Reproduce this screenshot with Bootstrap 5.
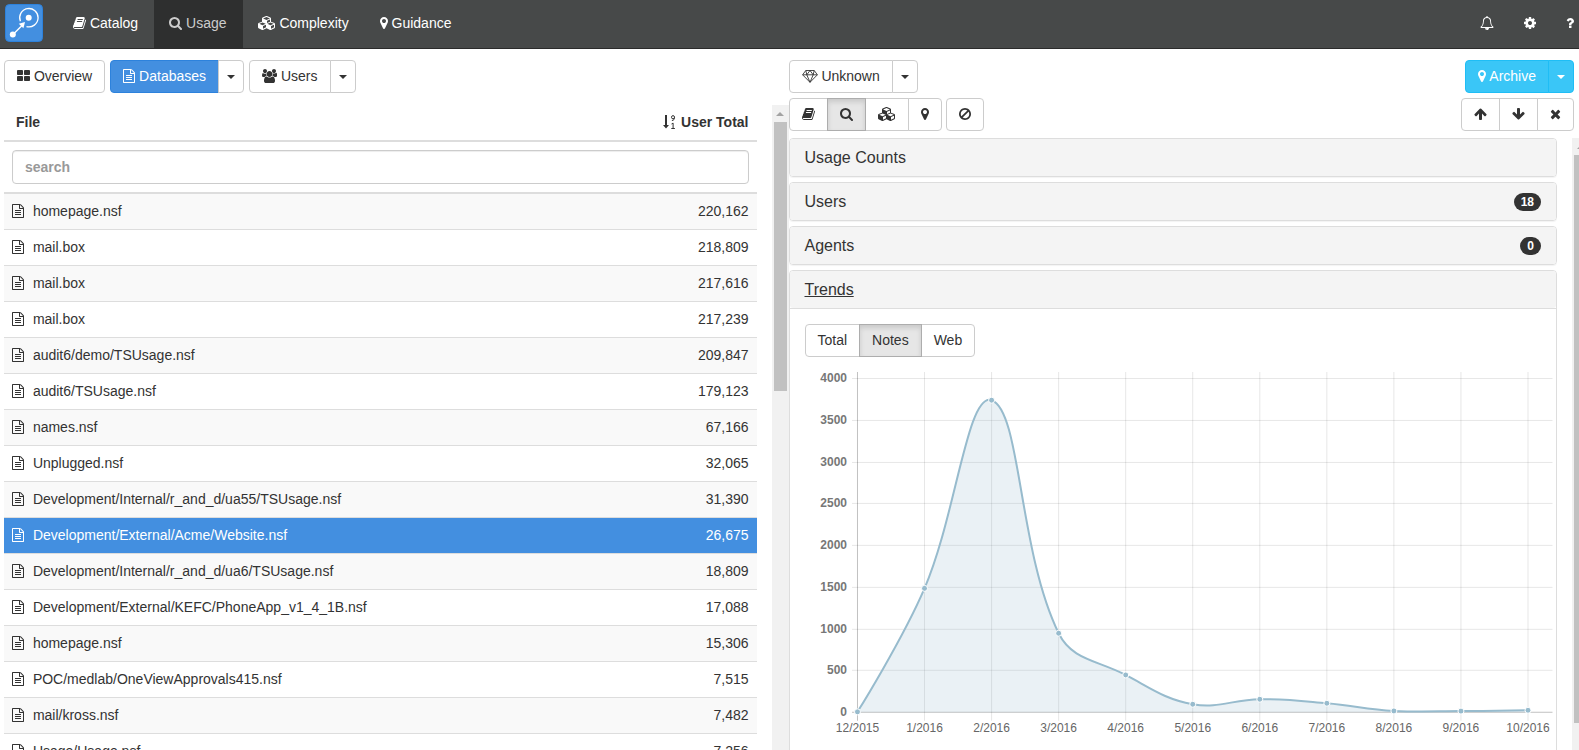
<!DOCTYPE html>
<html lang="en">
<head>
<meta charset="utf-8">
<meta name="viewport" content="width=device-width, initial-scale=1">
<title>Usage - Databases</title>
<link href="https://cdn.jsdelivr.net/npm/bootstrap@5.3.0/dist/css/bootstrap.min.css" rel="stylesheet">
<style>
  :root { --ink: #333; --line: #ddd; --edge: #ccc; --brand: #438fe0; --sky: #3ac6f7; --bar: 17px; }
  body { font: 14px/20px "Liberation Sans", Arial, sans-serif; color: var(--ink); background: #fff; }
  .fa-ico { height: 14px; fill: currentColor; vertical-align: -2px; }

  /* top navigation */
  .topbar { background: #474949; border-bottom: 1px solid #2b2b2b; height: 49px; }
  .topbar .nav-link { color: #fff; padding: 13px 15px 15px; line-height: 20px; }
  .topbar .main-nav .nav-link { padding: 13px 16px 15px 15px; }
  .topbar .nav-link.active { background: #2e2f2f; color: #ccc; }
  .brand { padding: 4px 15px 6px 5px; }
  .tools { margin-right: -10px; }

  /* buttons */
  .btn { --bs-btn-font-size: 14px; --bs-btn-line-height: 19px; --bs-btn-padding-y: 6px; --bs-btn-padding-x: 12px; --bs-btn-border-radius: 4px; }
  .btn-plain { --bs-btn-color: #333; --bs-btn-bg: #fff; --bs-btn-border-color: #ccc; --bs-btn-hover-bg: #e6e6e6; --bs-btn-hover-border-color: #adadad; --bs-btn-active-bg: #e6e6e6; --bs-btn-active-color: #333; --bs-btn-active-border-color: #adadad; }
  .btn-plain.active { box-shadow: inset 0 3px 5px rgba(0,0,0,.125); }
  .btn-brand { --bs-btn-color: #fff; --bs-btn-bg: var(--brand); --bs-btn-border-color: #2d82dc; --bs-btn-hover-color: #fff; --bs-btn-hover-bg: #2d82dc; }
  .btn-sky { --bs-btn-color: #fff; --bs-btn-bg: var(--sky); --bs-btn-border-color: #1fbdf5; --bs-btn-hover-color: #fff; --bs-btn-hover-bg: #1fbdf5; }
  .btn-caret { --bs-btn-padding-x: 8px; }
  .btn-caret::after { border-width: 4px 4px 0; margin: 0 !important; vertical-align: middle; }

  /* panes */
  .pane-left { width: calc(50% - 1px); padding: 11px 0 0 4px; }
  .pane-right { padding-top: 11px; margin-right: -10px; }
  .bars { gap: 5px; padding-right: 15px; margin-bottom: 7px; }
  .bars > div { gap: 4px; }
  .left-bar { gap: 5px; margin-bottom: 12px; }
  .scroll-area { margin-right: 15px; }
  .track { width: var(--bar); background: #f1f1f1; padding: 0 2px; }
  .track::before { content: ""; display: block; margin: 7px auto 6px; border: solid transparent; border-width: 0 4px 4px; border-bottom-color: #a3a3a3; width: 0; }
  .thumb { background: #c1c1c1; }

  /* file list */
  .files { --bs-table-color: #333; margin: 0; border-collapse: separate; border-spacing: 0; }
  .files > :not(caption) > * > * { padding: 8px; line-height: 19px; border-bottom: 1px solid var(--line); }
  .files > thead > tr > th { border-bottom-width: 2px; }
  .files > thead > tr:first-child > th:first-child { padding-left: 12px; }
  .files > tbody > tr:nth-child(odd) > td { background: #f9f9f9; }
  .files > tbody > tr.picked > td { background: var(--brand); color: #fff; }
  .files .fa-ico { margin-right: 5px; }
  .files th .fa-ico { margin-right: 0; }
  .files .form-control { font: bold 14px/20px "Liberation Sans", Arial, sans-serif; padding: 6px 12px; border-color: var(--edge); border-radius: 4px; box-shadow: inset 0 1px 1px rgba(0,0,0,.075); }
  .files .form-control::placeholder { color: #999; opacity: 1; }

  /* detail panels */
  .panels { gap: 5px; }
  .panel { border: 1px solid var(--line); border-radius: 4px; box-shadow: 0 1px 1px rgba(0,0,0,.05); }
  .panel-top { background: #f4f4f4; padding: 10px 15px; border-radius: 3px; }
  .panel-top h2 { font-size: 16px; line-height: 17px; font-weight: 400; margin: 0; }
  .panel-top a { color: #333; text-decoration: none; }
  .panel-top a[aria-expanded="true"] { text-decoration: underline; }
  .count { font-size: 12px; line-height: 12px; padding: 3px 7px; border-radius: 10px; background: #333; color: #fff; font-weight: 700; margin-bottom: -1px; }
  .panel-main { border-top: 1px solid var(--line); padding: 15px 3px 15px 15px; }
  .chart { margin-top: 15px; font: 12px "Liberation Sans", Arial, sans-serif; }
  .chart text { fill: #666; }
  .chart .y-label { font-weight: 700; fill: #777; text-anchor: end; }
  .chart .x-label { text-anchor: middle; }
  .chart .grid-line { stroke: rgba(0,0,0,.1); }
  .chart .axis { stroke: rgba(0,0,0,.25); stroke-width: 1; }
  .chart .area { fill: rgba(151,187,205,.2); stroke: none; }
  .chart .curve { fill: none; stroke: #97bbcd; stroke-width: 2; }
  .chart circle { fill: #97bbcd; stroke: #fff; stroke-width: 1; }
</style>
</head>
<body class="vh-100 overflow-hidden d-flex flex-column">

<svg width="0" height="0" class="position-absolute" aria-hidden="true">
  <symbol id="i-book" viewBox="64 0 1664 1792"><path d="M1703 478q40 57 18 129l-275 906q-19 64-76.5 107.5t-122.5 43.5h-923q-77 0-148.5-53.5t-99.5-131.5q-24-67-2-127 0-4 3-27t4-37q1-8-3-21.5t-3-19.5q2-11 8-21t16.5-23.5 16.5-23.5q23-38 45-91.5t30-91.5q3-10 .5-30t-.5-28q3-11 17-28t17-23q21-36 42-92t25-90q1-9-2.5-32t.5-28q4-13 22-30.5t22-22.5q19-26 42.5-84.5t27.5-96.5q1-8-3-25.5t-2-26.5q2-8 9-18t18-23 17-21q8-12 16.500-30.500t15-35 16-36 19.500-32 26.500-23.500 36-11.500 47.500 5.500l-1 3q38-9 51-9h761q74 0 114 56t18 130l-274 906q-36 119-71.500 153.500t-128.500 34.500h-869q-27 0-38 15-11 16-1 43 24 70 144 70h923q29 0 56-15.500t35-41.500l300-987q7-22 5-57 38 15 59 43zm-1064 2q-4 13 2 22.500t20 9.500h608q13 0 25.500-9.500t16.500-22.500l21-64q4-13-2-22.500t-20-9.500h-608q-13 0-25.500 9.500t-16.500 22.500zm-83 256q-4 13 2 22.500t20 9.500h608q13 0 25.500-9.500t16.500-22.500l21-64q4-13-2-22.500t-20-9.500h-608q-13 0-25.500 9.500t-16.500 22.500z"/></symbol>
  <symbol id="i-search" viewBox="64 0 1664 1792"><path d="M1216 832q0-185-131.500-316.500t-316.500-131.500-316.500 131.500-131.500 316.500 131.500 316.500 316.500 131.500 316.500-131.500 131.500-316.500zm512 832q0 52-38 90t-90 38q-54 0-90-38l-343-342q-179 124-399 124-143 0-273.500-55.500t-225-150-150-225-55.500-273.500 55.500-273.500 150-225 225-150 273.500-55.500 273.500 55.500 225 150 150 225 55.500 273.500q0 220-124 399l343 343q37 37 37 90z"/></symbol>
  <symbol id="i-cubes" viewBox="0 0 2304 1792"><path d="M640 1632l384-192v-314l-384 164v342zm-64-454l404-173-404-173-404 173zm1088 454l384-192v-314l-384 164v342zm-64-454l404-173-404-173-404 173zm-448-293l384-165v-266l-384 164v267zm-64-379l441-189-441-189-441 189zm1088 518v416q0 36-19 67t-52 47l-448 224q-25 14-57 14t-57-14l-448-224q-4-2-7-4-2 2-7 4l-448 224q-25 14-57 14t-57-14l-448-224q-33-16-52-47t-19-67v-416q0-38 21.500-70t56.500-48l434-186v-400q0-38 21.500-70t56.500-48l448-192q23-10 50-10t50 10l448 192q35 16 56.500 48t21.500 70v400l434 186q36 16 57 48t21 70z"/></symbol>
  <symbol id="i-pin" viewBox="384 0 1024 1792"><path d="M1152 640q0-106-75-181t-181-75-181 75-75 181 75 181 181 75 181-75 75-181zm256 0q0 109-33 179l-364 774q-16 33-47.500 52t-67.500 19-67.500-19-46.500-52l-365-774q-33-70-33-179 0-212 150-362t362-150 362 150 150 362z"/></symbol>
  <symbol id="i-bell" viewBox="0 0 1792 1792"><path d="M912 1696q0-16-16-16-59 0-101.500-42.500t-42.500-101.500q0-16-16-16t-16 16q0 73 51.500 124.500t124.500 51.500q16 0 16-16zm-666-288h1300q-266-300-266-832 0-51-24-105t-69-103-121.500-80.500-169.500-31.500-169.500 31.500-121.500 80.500-69 103-24 105q0 532-266 832zm1482 0q0 52-38 90t-90 38h-448q0 106-75 181t-181 75-181-75-75-181h-448q-52 0-90-38t-38-90q50-42 91-88t85-119.500 74.500-158.500 50-206 19.500-260q0-152 117-282.500t307-158.500q-8-19-8-39 0-40 28-68t68-28 68 28 28 68q0 20-8 39 190 28 307 158.500t117 282.500q0 139 19.500 260t50 206 74.500 158.500 85 119.500 91 88z"/></symbol>
  <symbol id="i-cog" viewBox="128 0 1536 1792"><path d="M1152 896q0-106-75-181t-181-75-181 75-75 181 75 181 181 75 181-75 75-181zm512-109v222q0 12-8 23t-20 13l-185 28q-19 54-39 91 35 50 107 138 10 12 10 25t-9 23q-27 37-99 108t-94 71q-12 0-26-9l-138-108q-44 23-91 38-16 136-29 186-7 28-36 28h-222q-14 0-24.500-8.500t-11.500-21.500l-28-184q-49-16-90-37l-141 107q-10 9-25 9-14 0-25-11-126-114-165-168-7-10-7-23 0-12 8-23 15-21 51-66.500t54-70.500q-27-50-41-99l-183-27q-13-2-21-12.500t-8-23.500v-222q0-12 8-23t19-13l186-28q14-46 39-92-40-57-107-138-10-12-10-24 0-10 9-23 26-36 98.500-107.500t94.500-71.500q13 0 26 10l138 107q44-23 91-38 16-136 29-186 7-28 36-28h222q14 0 24.500 8.500t11.500 21.500l28 184q49 16 90 37l142-107q9-9 24-9 13 0 25 10 129 119 165 170 7 8 7 22 0 12-8 23-15 21-51 66.500t-54 70.500q26 50 41 98l183 28q13 2 21 12.500t8 23.500z"/></symbol>
  <symbol id="i-help" viewBox="384 0 1024 1792"><path d="M1088 1256v240q0 16-12 28t-28 12h-240q-16 0-28-12t-12-28v-240q0-16 12-28t28-12h240q16 0 28 12t12 28zm316-600q0 54-15.500 101t-35 76.500-55 59.500-57.500 43.500-61 35.500q-41 23-68.500 65t-27.500 67q0 17-12 32.500t-28 15.500h-240q-15 0-25.500-18.500t-10.500-37.500v-45q0-83 65-156.500t143-108.500q59-27 84-56t25-76q0-42-46.500-74t-107.500-32q-65 0-108 29-35 25-107 115-13 16-31 16-12 0-25-8l-164-125q-13-10-15.500-25t5.500-28q160-266 464-266 80 0 161 31t146 83 106 127.500 41 158.500z"/></symbol>
  <symbol id="i-grid" viewBox="64 0 1664 1792"><path d="M832 1024v384q0 52-38 90t-90 38h-512q-52 0-90-38t-38-90v-384q0-52 38-90t90-38h512q52 0 90 38t38 90zm0-768v384q0 52-38 90t-90 38h-512q-52 0-90-38t-38-90v-384q0-52 38-90t90-38h512q52 0 90 38t38 90zm896 768v384q0 52-38 90t-90 38h-512q-52 0-90-38t-38-90v-384q0-52 38-90t90-38h512q52 0 90 38t38 90zm0-768v384q0 52-38 90t-90 38h-512q-52 0-90-38t-38-90v-384q0-52 38-90t90-38h512q52 0 90 38t38 90z"/></symbol>
  <symbol id="i-file" viewBox="128 0 1536 1792"><path d="M1596 380q28 28 48 76t20 88v1152q0 40-28 68t-68 28h-1344q-40 0-68-28t-28-68v-1600q0-40 28-68t68-28h896q40 0 88 20t76 48zm-444-244v376h376q-10-29-22-41l-313-313q-12-12-41-22zm384 1528v-1024h-416q-40 0-68-28t-28-68v-416h-768v1536h1280zm-1024-864q0-14 9-23t23-9h704q14 0 23 9t9 23v64q0 14-9 23t-23 9h-704q-14 0-23-9t-9-23v-64zm736 224q14 0 23 9t9 23v64q0 14-9 23t-23 9h-704q-14 0-23-9t-9-23v-64q0-14 9-23t23-9h704zm0 256q14 0 23 9t9 23v64q0 14-9 23t-23 9h-704q-14 0-23-9t-9-23v-64q0-14 9-23t23-9h704z"/></symbol>
  <symbol id="i-users" viewBox="0 0 1920 1792"><path d="M593 896q-162 5-265 128h-134q-82 0-138-40.500t-56-118.500q0-353 124-353 6 0 43.500 21t97.500 42.500 119 21.500q67 0 133-23-5 37-5 66 0 159 81 256zm1071 637q0 120-73 189.500t-194 69.500h-874q-121 0-194-69.500t-73-189.500q0-53 3.500-103.500t14-109 26.500-108.500 43-97.500 62-81 85.500-53.500 111.500-20q10 0 43 21.500t73 48 107 48 135 21.500 135-21.500 107-48 73-48 43-21.500q61 0 111.500 20t85.500 53.500 62 81 43 97.500 26.500 108.500 14 109 3.500 103.500zm-1024-1277q0 106-75 181t-181 75-181-75-75-181 75-181 181-75 181 75 75 181zm704 384q0 159-112.500 271.500t-271.500 112.500-271.500-112.500-112.500-271.500 112.500-271.500 271.500-112.500 271.500 112.500 112.500 271.500zm576 225q0 78-56 118.500t-138 40.500h-134q-103-123-265-128 93-131 93-290 0-29-5-66 66 23 133 23 59 0 119-21.500t97.500-42.500 43.500-21q124 0 124 353zm-128-609q0 106-75 181t-181 75-181-75-75-181 75-181 181-75 181 75 75 181z"/></symbol>
  <symbol id="i-ban" viewBox="128 0 1536 1792"><path d="M1440 893q0-161-87-295l-754 753q137 89 297 89 111 0 211.500-43.500t173.500-116.500 116-174.500 43-212.500zm-999 299l755-754q-135-91-300-91-148 0-273 73t-198 199-73 274q0 162 89 299zm1223-299q0 157-61 300t-163.500 246-245 164-298.500 61-298.500-61-245-164-163.500-246-61-300 61-299.500 163.500-245.500 245-164 298.500-61 298.500 61 245 164 163.500 245.500 61 299.500z"/></symbol>
  <symbol id="i-up" viewBox="64 0 1664 1792"><path id="arrow" d="M1675 971q0 51-37 90l-75 75q-38 38-91 38-54 0-90-38l-294-293v704q0 52-37.500 84.500t-90.500 32.500h-128q-53 0-90.500-32.500t-37.500-84.500v-704l-294 293q-36 38-90 38t-90-38l-75-75q-38-38-38-90 0-53 38-91l651-651q35-37 90-37 54 0 91 37l651 651q37 39 37 91z"/></symbol>
  <symbol id="i-down" viewBox="64 0 1664 1792"><use href="#arrow" transform="rotate(180 896 896)"/></symbol>
  <symbol id="i-close" viewBox="192 0 1408 1792"><path d="M1490 1322q0 40-28 68l-136 136q-28 28-68 28t-68-28l-294-294-294 294q-28 28-68 28t-68-28l-136-136q-28-28-28-68t28-68l294-294-294-294q-28-28-28-68t28-68l136-136q28-28 68-28t68 28l294 294 294-294q28-28 68-28t68 28l136 136q28 28 28 68t-28 68l-294 294 294 294q28 28 28 68z"/></symbol>
  <symbol id="i-gem" viewBox="0 0 16 14"><path d="M3.800 1.500h8.400l3.200 4.300L8 13.300.6 5.800zM.6 5.800h14.800M3.800 1.500l1 4.300L8 13.300l3.200-7.500 1-4.300M4.800 5.800L8 1.500l3.200 4.300" fill="none" stroke="currentColor" stroke-width=".9" stroke-linejoin="round"/></symbol>
  <symbol id="i-sort" viewBox="0 0 14 14"><path d="M2 0h2v10h2L3 13.500 0 10h2z"/><path d="M11.500 2.300a1.500 1.700 0 1 0-3 0 1.500 1.500 0 0 0 3 0c0 2-.8 3.200-2.600 3.200M8.500 9l1.600-.9v5M8.300 13.500h3.600" fill="none" stroke="currentColor" stroke-width="1"/></symbol>
</svg>

<header class="topbar d-flex flex-shrink-0">
  <a class="brand" href="#" aria-label="Home">
    <svg class="d-block" width="38" height="38" viewBox="0 0 38 38" fill="none" stroke="#fff">
      <rect x=".5" y=".5" width="37" height="37" rx="4" fill="#438fe0" stroke="#2d82dc"/>
      <path d="M15.400 17.300A9.200 9.200 0 1 1 21.500 22.600" stroke-width="1.300"/>
      <circle cx="23.700" cy="13.700" r="3" fill="#fff" stroke="none"/>
      <circle cx="7.800" cy="30.600" r="3" fill="#fff" stroke="none"/>
      <path d="M8 30.500l9-9" stroke-width="1.500"/>
      <path d="M20 18l-1.600 6.200-4.600-4.500z" fill="#fff" stroke="none"/>
    </svg>
  </a>
  <nav class="nav flex-nowrap main-nav" aria-label="Main">
    <a class="nav-link" href="#"><svg class="fa-ico" width="13"><use href="#i-book"/></svg> Catalog</a>
    <a class="nav-link active" aria-current="page" href="#"><svg class="fa-ico" width="13"><use href="#i-search"/></svg> Usage</a>
    <a class="nav-link" href="#"><svg class="fa-ico" width="18"><use href="#i-cubes"/></svg> Complexity</a>
    <a class="nav-link" href="#"><svg class="fa-ico" width="8"><use href="#i-pin"/></svg> Guidance</a>
  </nav>
  <nav class="nav flex-nowrap ms-auto tools" aria-label="Tools">
    <a class="nav-link" href="#" aria-label="Notifications"><svg class="fa-ico" width="14"><use href="#i-bell"/></svg></a>
    <a class="nav-link" href="#" aria-label="Settings"><svg class="fa-ico" width="12"><use href="#i-cog"/></svg></a>
    <a class="nav-link" href="#" aria-label="Help"><svg class="fa-ico" width="8"><use href="#i-help"/></svg></a>
  </nav>
</header>

<main class="d-flex flex-grow-1 overflow-hidden">
  <section class="pane-left flex-shrink-0 d-flex flex-column overflow-hidden">
    <div class="left-bar d-flex">
      <button type="button" class="btn btn-plain"><svg class="fa-ico" width="13"><use href="#i-grid"/></svg> Overview</button>
      <div class="btn-group">
        <button type="button" class="btn btn-brand"><svg class="fa-ico" width="12"><use href="#i-file"/></svg> Databases</button>
        <button type="button" class="btn btn-plain btn-caret dropdown-toggle" aria-label="Database views"></button>
      </div>
      <div class="btn-group">
        <button type="button" class="btn btn-plain"><svg class="fa-ico" width="15"><use href="#i-users"/></svg> Users</button>
        <button type="button" class="btn btn-plain btn-caret dropdown-toggle" aria-label="User views"></button>
      </div>
    </div>
    <div class="d-flex flex-grow-1 overflow-hidden">
      <div class="scroll-area flex-grow-1 overflow-hidden">
        <table class="table files">
          <thead>
            <tr><th scope="col">File</th><th scope="col" class="text-end"><svg class="fa-ico" width="14"><use href="#i-sort"/></svg> User Total</th></tr>
            <tr><th colspan="2"><input type="search" class="form-control" placeholder="search" aria-label="Search files"></th></tr>
          </thead>
          <tbody>
            <tr><td><svg class="fa-ico" width="12"><use href="#i-file"/></svg> homepage.nsf</td><td class="text-end">220,162</td></tr>
            <tr><td><svg class="fa-ico" width="12"><use href="#i-file"/></svg> mail.box</td><td class="text-end">218,809</td></tr>
            <tr><td><svg class="fa-ico" width="12"><use href="#i-file"/></svg> mail.box</td><td class="text-end">217,616</td></tr>
            <tr><td><svg class="fa-ico" width="12"><use href="#i-file"/></svg> mail.box</td><td class="text-end">217,239</td></tr>
            <tr><td><svg class="fa-ico" width="12"><use href="#i-file"/></svg> audit6/demo/TSUsage.nsf</td><td class="text-end">209,847</td></tr>
            <tr><td><svg class="fa-ico" width="12"><use href="#i-file"/></svg> audit6/TSUsage.nsf</td><td class="text-end">179,123</td></tr>
            <tr><td><svg class="fa-ico" width="12"><use href="#i-file"/></svg> names.nsf</td><td class="text-end">67,166</td></tr>
            <tr><td><svg class="fa-ico" width="12"><use href="#i-file"/></svg> Unplugged.nsf</td><td class="text-end">32,065</td></tr>
            <tr><td><svg class="fa-ico" width="12"><use href="#i-file"/></svg> Development/Internal/r_and_d/ua55/TSUsage.nsf</td><td class="text-end">31,390</td></tr>
            <tr class="picked"><td><svg class="fa-ico" width="12"><use href="#i-file"/></svg> Development/External/Acme/Website.nsf</td><td class="text-end">26,675</td></tr>
            <tr><td><svg class="fa-ico" width="12"><use href="#i-file"/></svg> Development/Internal/r_and_d/ua6/TSUsage.nsf</td><td class="text-end">18,809</td></tr>
            <tr><td><svg class="fa-ico" width="12"><use href="#i-file"/></svg> Development/External/KEFC/PhoneApp_v1_4_1B.nsf</td><td class="text-end">17,088</td></tr>
            <tr><td><svg class="fa-ico" width="12"><use href="#i-file"/></svg> homepage.nsf</td><td class="text-end">15,306</td></tr>
            <tr><td><svg class="fa-ico" width="12"><use href="#i-file"/></svg> POC/medlab/OneViewApprovals415.nsf</td><td class="text-end">7,515</td></tr>
            <tr><td><svg class="fa-ico" width="12"><use href="#i-file"/></svg> mail/kross.nsf</td><td class="text-end">7,482</td></tr>
            <tr><td><svg class="fa-ico" width="12"><use href="#i-file"/></svg> Usage/Usage.nsf</td><td class="text-end">7,256</td></tr>
          </tbody>
        </table>
      </div>
      <div class="track flex-shrink-0"><div class="thumb" style="height:41.7%"></div></div>
    </div>
  </section>

  <section class="pane-right flex-grow-1 d-flex flex-column overflow-hidden">
    <div class="bars d-flex flex-column">
      <div class="d-flex">
        <div class="btn-group">
          <button type="button" class="btn btn-plain"><svg class="fa-ico" width="16"><use href="#i-gem"/></svg> Unknown</button>
          <button type="button" class="btn btn-plain btn-caret dropdown-toggle" aria-label="Value"></button>
        </div>
        <div class="btn-group ms-auto">
          <button type="button" class="btn btn-sky"><svg class="fa-ico" width="8"><use href="#i-pin"/></svg> Archive</button>
          <button type="button" class="btn btn-sky btn-caret dropdown-toggle" aria-label="Guidance"></button>
        </div>
      </div>
      <div class="d-flex">
        <div class="btn-group">
          <button type="button" class="btn btn-plain" aria-label="Catalog"><svg class="fa-ico" width="13"><use href="#i-book"/></svg></button>
          <button type="button" class="btn btn-plain active" aria-label="Usage"><svg class="fa-ico" width="13"><use href="#i-search"/></svg></button>
          <button type="button" class="btn btn-plain" aria-label="Complexity"><svg class="fa-ico" width="18"><use href="#i-cubes"/></svg></button>
          <button type="button" class="btn btn-plain" aria-label="Guidance"><svg class="fa-ico" width="8"><use href="#i-pin"/></svg></button>
        </div>
        <button type="button" class="btn btn-plain" aria-label="Exclude"><svg class="fa-ico" width="12"><use href="#i-ban"/></svg></button>
        <div class="btn-group ms-auto">
          <button type="button" class="btn btn-plain" aria-label="Previous"><svg class="fa-ico" width="13"><use href="#i-up"/></svg></button>
          <button type="button" class="btn btn-plain" aria-label="Next"><svg class="fa-ico" width="13"><use href="#i-down"/></svg></button>
          <button type="button" class="btn btn-plain" aria-label="Close"><svg class="fa-ico" width="11"><use href="#i-close"/></svg></button>
        </div>
      </div>
    </div>
    <div class="d-flex flex-grow-1 overflow-hidden">
      <div class="panels scroll-area flex-grow-1 overflow-hidden d-flex flex-column">
        <div class="panel flex-shrink-0"><div class="panel-top"><h2><a href="#">Usage Counts</a></h2></div></div>
        <div class="panel flex-shrink-0"><div class="panel-top d-flex justify-content-between"><h2><a href="#">Users</a></h2><span class="count">18</span></div></div>
        <div class="panel flex-shrink-0"><div class="panel-top d-flex justify-content-between"><h2><a href="#">Agents</a></h2><span class="count">0</span></div></div>
        <div class="panel flex-shrink-0">
          <div class="panel-top"><h2><a href="#trends" aria-expanded="true">Trends</a></h2></div>
          <div class="panel-main" id="trends">
            <div class="btn-group">
              <button type="button" class="btn btn-plain">Total</button>
              <button type="button" class="btn btn-plain active">Notes</button>
              <button type="button" class="btn btn-plain">Web</button>
            </div>
            <svg class="chart d-block w-100" id="chart" viewBox="0 0 749 378" role="img" aria-label="Notes usage by month"></svg>
          </div>
        </div>
      </div>
      <div class="track flex-shrink-0"><div class="thumb" style="height:92.8%"></div></div>
    </div>
  </section>
</main>

<script src="https://cdn.jsdelivr.net/npm/bootstrap@5.3.0/dist/js/bootstrap.bundle.min.js"></script>
<script>
  const months = ['12/2015','1/2016','2/2016','3/2016','4/2016','5/2016','6/2016','7/2016','8/2016','9/2016','10/2016'];
  const counts = [5, 1485, 3740, 947, 447, 96, 156, 108, 16, 14, 24];
  const left = 52.5, base = 340.5, stepX = 67.1, stepY = 41.75, tension = 0.4;
  const pts = counts.map((v, i) => ({ x: left + i * stepX, y: base - v / 500 * stepY }));
  let out = '';
  // grid and labels
  for (let i = 0; i <= 8; i++) {
    const y = Math.floor(base - i * stepY) + .5;
    out += `<path class="${i ? 'grid-line' : 'axis'}" d="M47 ${y}H748"/><text class="y-label" x="42" y="${y + 3.5}">${i * 500}</text>`;
  }
  months.forEach((m, i) => {
    const x = left + i * stepX;
    out += `<path class="${i ? 'grid-line' : 'axis'}" d="M${x} 0V349"/><text class="x-label" x="${x}" y="360">${m}</text>`;
  });
  // smoothed line: control points lie along the chord between the neighbours
  const clamp = y => Math.min(base, y);
  const handles = pts.map((p, i) => {
    const a = pts[i - 1], b = pts[i + 1];
    if (!a || !b) return { in: p, out: p };
    const d1 = Math.hypot(p.x - a.x, p.y - a.y), d2 = Math.hypot(b.x - p.x, b.y - p.y);
    const f1 = tension * d1 / (d1 + d2), f2 = tension * d2 / (d1 + d2);
    return {
      in: { x: p.x - f1 * (b.x - a.x), y: clamp(p.y - f1 * (b.y - a.y)) },
      out: { x: p.x + f2 * (b.x - a.x), y: clamp(p.y + f2 * (b.y - a.y)) }
    };
  });
  let d = `M${pts[0].x} ${pts[0].y}`;
  for (let i = 1; i < pts.length; i++) {
    const o = handles[i - 1].out, n = handles[i].in;
    d += `C${o.x} ${o.y} ${n.x} ${n.y} ${pts[i].x} ${pts[i].y}`;
  }
  out += `<path class="area" d="${d}V${base}H${left}Z"/><path class="curve" d="${d}"/>`;
  pts.forEach(p => out += `<circle cx="${p.x}" cy="${p.y}" r="3"/>`);
  document.getElementById('chart').innerHTML = out;
</script>
</body>
</html>
